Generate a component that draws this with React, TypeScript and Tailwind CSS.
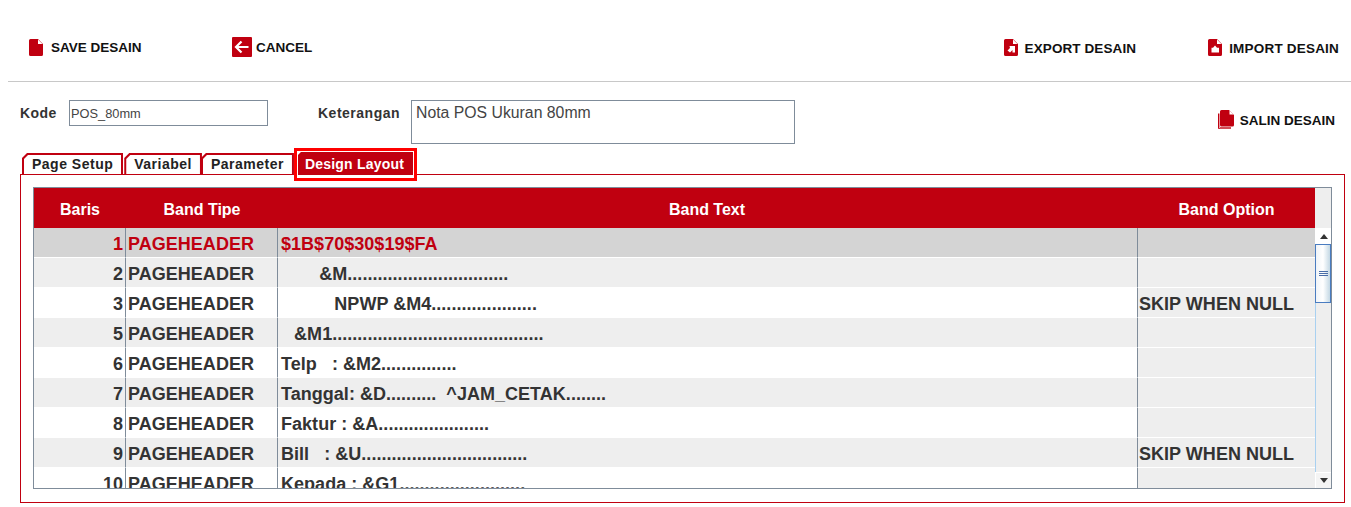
import React from 'react'

const RED = '#c00010'

type Row = { no: number; text: string; option?: string; selected?: boolean }

const rows: Row[] = [
  { no: 1, text: '$1B$70$30$19$FA', selected: true },
  { no: 2, text: '        &M................................' },
  { no: 3, text: '           NPWP &M4.....................', option: 'SKIP WHEN NULL' },
  { no: 5, text: '   &M1..........................................' },
  { no: 6, text: 'Telp   : &M2...............' },
  { no: 7, text: 'Tanggal: &D..........  ^JAM_CETAK........' },
  { no: 8, text: 'Faktur : &A......................' },
  { no: 9, text: 'Bill   : &U.................................', option: 'SKIP WHEN NULL' },
  { no: 10, text: 'Kepada : &G1.........................' },
]

function FileIcon({ mark }: { mark?: 'out' | 'in' }) {
  return (
    <svg width="14" height="17" viewBox="0 0 14 17" className="shrink-0">
      <path d="M1.5 0H9l5 5v10.5a1.5 1.5 0 0 1-1.5 1.5h-11A1.5 1.5 0 0 1 0 15.5v-14A1.5 1.5 0 0 1 1.5 0z" fill={RED} />
      <path d="M9 0.5L13.5 5H9z" fill="#fff" />
      {mark === 'out' && <path d="M5.5 7H11v6.5H8.5V11l-2.5 2.5L3.5 11.5 6 9z" fill="#fff" />}
      {mark === 'in' && <path d="M7 6.5l2 2.2h2v4.8H3.5V8.7h1.5z" fill="#fff" />}
    </svg>
  )
}

function CopyIcon() {
  return (
    <svg width="18" height="20" viewBox="0 0 18 20" className="shrink-0">
      <path d="M1 3.5h2V17h11v2H2a1 1 0 0 1-1-1z" fill={RED} />
      <path d="M2.5 2.5V18H14" fill="none" stroke="#fff" strokeWidth="0.6" />
      <path d="M4.5 0H12l5 5v10a1.5 1.5 0 0 1-1.5 1.5h-11A1.5 1.5 0 0 1 3 15V1.5A1.5 1.5 0 0 1 4.5 0z" fill={RED} />
      <path d="M12.5 0.5l4 4h-4z" fill="#fff" />
    </svg>
  )
}

function BackIcon() {
  return (
    <svg width="20" height="20" viewBox="0 0 20 20" className="shrink-0">
      <rect width="20" height="20" rx="1" fill={RED} />
      <path d="M9.5 4.5L4 10l5.5 5.5M4.5 10h12" fill="none" stroke="#fff" strokeWidth="2.2" />
    </svg>
  )
}

function Tab({ label, active }: { label: string; active?: boolean }) {
  if (active) {
    return (
      <div className="relative z-10 -mt-[5px] -mb-[7px] h-[33px] border-[3px] border-[#ff0000] bg-white px-px pt-px">
        <div className="h-[23px] bg-[#c00010] pl-[7px] pr-[9px] text-[14px] font-bold leading-[24px] tracking-[0.2px] text-white [clip-path:polygon(3px_0,100%_0,100%_100%,0_100%,0_3px)]">
          {label}
        </div>
      </div>
    )
  }
  return (
    <div className="h-[21px] bg-[#c00010] px-[2px] pt-[2px] [clip-path:polygon(5px_0,100%_0,100%_100%,0_100%,0_5px)]">
      <div className="h-[19px] bg-white px-[8px] text-[14px] font-bold leading-[18px] tracking-[0.5px] text-[#222] [clip-path:polygon(4px_0,100%_0,100%_100%,0_100%,0_4px)]">
        {label}
      </div>
    </div>
  )
}

function Scrollbar() {
  return (
    <div className="flex w-[16px] shrink-0 flex-col bg-[#eeeeee]">
      <div className="h-[40px]" />
      <div className="flex h-[16px] items-center justify-center border-t border-l border-white bg-white">
        <svg width="8" height="5" viewBox="0 0 8 5"><path d="M0 5L4 0l4 5z" fill="#333" /></svg>
      </div>
      <div className="flex h-[59px] items-center justify-center border border-[#4a7cc0] bg-[linear-gradient(90deg,#f0f4f8_0%,#ffffff_50%,#c4d8e4_100%)]">
        <div className="flex flex-col gap-[1px]">
          <div className="h-px w-[9px] bg-[#4a6ea8]" />
          <div className="h-px w-[9px] bg-[#4a6ea8]" />
          <div className="h-px w-[9px] bg-[#4a6ea8]" />
        </div>
      </div>
      <div className="flex-1 border-l border-[#a8d0f0]" />
      <div className="flex h-[16px] items-center justify-center border-t border-l border-white bg-[#f4f4f4]">
        <svg width="8" height="5" viewBox="0 0 8 5"><path d="M0 0L4 5l4-5z" fill="#333" /></svg>
      </div>
    </div>
  )
}

function Grid() {
  return (
    <div className="flex h-[302px] border border-[#7f8c9a] font-bold">
      <div className="min-w-0 flex-1 overflow-hidden">
        <div className="flex h-[40px] bg-[#c00010] text-center text-[16px] leading-[44px] text-white">
          <div className="w-[92px]">Baris</div>
          <div className="w-[152px]">Band Tipe</div>
          <div className="w-[858px]">Band Text</div>
          <div className="flex-1 pl-[2px]">Band Option</div>
        </div>
        {rows.map((r, i) => {
          const tone = r.selected ? 'bg-[#d4d4d4] text-[#c00010]' : i % 2 === 1 ? 'bg-[#eeeeee] text-[#333]' : 'bg-white text-[#333]'
          const indent = r.text.startsWith(' ') ? '[text-indent:-2px]' : ''
          return (
            <div key={r.no} className={`flex h-[30px] text-[18px] leading-[33px] tracking-[0.03px] ${tone}`}>
              <div className="w-[92px] border-r border-[#7f8c9a] border-b border-b-white pr-[2px] text-right">{r.no}</div>
              <div className="w-[152px] border-r border-[#7f8c9a] border-b border-b-white pl-[2px]">PAGEHEADER</div>
              <div className={`w-[860px] border-r border-[#7f8c9a] border-b border-b-white pl-[3px] whitespace-pre ${indent}`}>{r.text}</div>
              <div className={`flex-1 border-b border-b-white pl-[1px] ${r.selected ? 'bg-[#d4d4d4]' : 'bg-[#eeeeee]'} text-[#333]`}>{r.option}</div>
            </div>
          )
        })}
      </div>
      <Scrollbar />
    </div>
  )
}

export default function App() {
  return (
    <div className="h-[507px] w-full overflow-hidden bg-white font-['Liberation_Sans',Arial,sans-serif]">
      <div className="ml-[8px] flex h-[82px] items-start justify-between border-b border-[#c8c8c8] pr-[12px] pt-[37px] text-[13.5px] font-bold leading-[20px] text-[#111]">
        <div className="flex">
          <div className="ml-[21px] flex h-[20px] w-[203px] items-center gap-[8px]"><FileIcon /><span className="translate-y-[1px]">SAVE DESAIN</span></div>
          <div className="flex h-[20px] items-center gap-[4px]"><BackIcon /><span className="translate-y-[1px]">CANCEL</span></div>
        </div>
        <div className="flex gap-[72px]">
          <div className="flex h-[20px] items-center gap-[7px]"><FileIcon mark="out" /><span className="translate-y-[2px] tracking-[0.1px]">EXPORT DESAIN</span></div>
          <div className="flex h-[20px] items-center gap-[7px]"><FileIcon mark="in" /><span className="translate-y-[2px] tracking-[0.2px]">IMPORT DESAIN</span></div>
        </div>
      </div>

      <div className="mt-[18px] flex h-[53px] px-[20px]">
        <div className="w-[49px] pt-[4px] text-[14px] font-bold leading-[18px] tracking-[0.45px] text-[#333]">Kode</div>
        <input
          readOnly
          value="POS_80mm"
          className="h-[26px] w-[199px] border border-[#7f8c9a] px-[1px] text-[12.8px] text-[#444] outline-none"
        />
        <div className="ml-[50px] w-[93px] pt-[4px] text-[14px] font-bold leading-[18px] tracking-[0.5px] text-[#333]">Keterangan</div>
        <textarea
          readOnly
          value="Nota POS Ukuran 80mm"
          className="h-[44px] w-[384px] resize-none overflow-hidden border border-[#7f8c9a] px-[4px] pt-[1px] text-[15.8px] leading-[22px] text-[#444] outline-none"
        />
        <div className="ml-auto mr-[-4px] flex h-[20px] translate-y-[10px] items-center gap-[5px] text-[13.5px] font-bold text-[#111]">
          <CopyIcon /><span className="translate-y-[1px]">SALIN DESAIN</span>
        </div>
      </div>

      <div className="flex items-end pl-[22px]">
        <div className="mr-[1px]"><Tab label="Page Setup" /></div>
        <div><Tab label="Variabel" /></div>
        <div className="-ml-[1px]"><Tab label="Parameter" /></div>
        <div><Tab label="Design Layout" active /></div>
      </div>
      <div className="ml-[20px] mr-[6px] h-[329px] border border-[#c00010] p-[12px]">
        <Grid />
      </div>
    </div>
  )
}
